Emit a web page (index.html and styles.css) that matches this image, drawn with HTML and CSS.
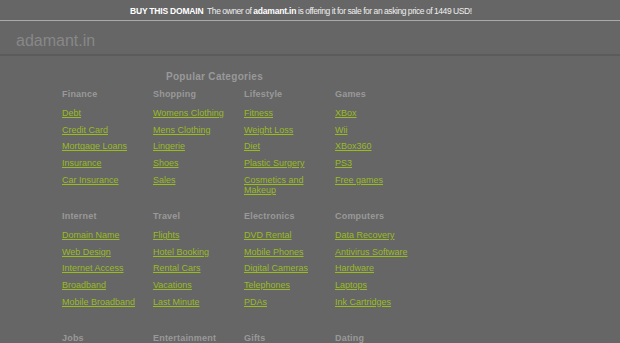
FILE: index.html
```html
<!DOCTYPE html>
<html lang="en">
<head>
    <meta charset="UTF-8">
    <meta name="viewport" content="width=device-width, initial-scale=1.0">
    <title>adamant.in</title>
    <link rel="stylesheet" href="styles.css">
</head>
<body>
    <div class="sale">
        <b>BUY THIS DOMAIN</b> The owner of <b class="dom">adamant.in</b> is offering it for sale for an asking price of 1449 USD!
    </div>
    <div class="header">adamant.in</div>

    <div class="content">
        <div class="title">Popular Categories</div>
        <div class="cats">
            <div class="cat">
                <h3>Finance</h3>
                <a href="#">Debt</a>
                <a href="#">Credit Card</a>
                <a href="#">Mortgage Loans</a>
                <a href="#">Insurance</a>
                <a href="#">Car Insurance</a>
            </div>
            <div class="cat">
                <h3>Shopping</h3>
                <a href="#">Womens Clothing</a>
                <a href="#">Mens Clothing</a>
                <a href="#">Lingerie</a>
                <a href="#">Shoes</a>
                <a href="#">Sales</a>
            </div>
            <div class="cat">
                <h3>Lifestyle</h3>
                <a href="#">Fitness</a>
                <a href="#">Weight Loss</a>
                <a href="#">Diet</a>
                <a href="#">Plastic Surgery</a>
                <a href="#">Cosmetics and Makeup</a>
            </div>
            <div class="cat">
                <h3>Games</h3>
                <a href="#">XBox</a>
                <a href="#">Wii</a>
                <a href="#">XBox360</a>
                <a href="#">PS3</a>
                <a href="#">Free games</a>
            </div>

            <div class="cat">
                <h3>Internet</h3>
                <a href="#">Domain Name</a>
                <a href="#">Web Design</a>
                <a href="#">Internet Access</a>
                <a href="#">Broadband</a>
                <a href="#">Mobile Broadband</a>
            </div>
            <div class="cat">
                <h3>Travel</h3>
                <a href="#">Flights</a>
                <a href="#">Hotel Booking</a>
                <a href="#">Rental Cars</a>
                <a href="#">Vacations</a>
                <a href="#">Last Minute</a>
            </div>
            <div class="cat">
                <h3>Electronics</h3>
                <a href="#">DVD Rental</a>
                <a href="#">Mobile Phones</a>
                <a href="#">Digital Cameras</a>
                <a href="#">Telephones</a>
                <a href="#">PDAs</a>
            </div>
            <div class="cat">
                <h3>Computers</h3>
                <a href="#">Data Recovery</a>
                <a href="#">Antivirus Software</a>
                <a href="#">Hardware</a>
                <a href="#">Laptops</a>
                <a href="#">Ink Cartridges</a>
            </div>

            <div class="cat">
                <h3>Jobs</h3>
            </div>
            <div class="cat">
                <h3>Entertainment</h3>
            </div>
            <div class="cat">
                <h3>Gifts</h3>
            </div>
            <div class="cat">
                <h3>Dating</h3>
            </div>
        </div>
    </div>
</body>
</html>
```

FILE: styles.css
```css
*{
    margin: 0;
    padding: 0;
}
html,body{
    background-color: #666;
    font-family: "Liberation Sans", Arial, sans-serif;
    overflow: hidden;
}
.sale{
    height: 20px;
    line-height: 22px;
    border-bottom: 1px solid #aaa;
    color: #eee;
    font-size: 8.5px;
    letter-spacing: -0.45px;
    padding-left: 130px;
    white-space: nowrap;
}
.sale b{
    color: #fff;
    letter-spacing: -0.2px;
    margin-right: 2px;
}
.sale b.dom{
    margin-right: 0;
}
.header{
    height: 33px;
    line-height: 39px;
    border-bottom: 2px solid #5b5b5b;
    padding-left: 16px;
    color: #888;
    font-size: 16px;
}
.content{
    padding-left: 62px;
    padding-top: 15px;
}
.title{
    width: 305px;
    text-align: center;
    color: #999;
    font-weight: bold;
    font-size: 10px;
    letter-spacing: 0.3px;
    line-height: 12px;
}
.cats{
    display: grid;
    grid-template-columns: repeat(4, 91px);
    grid-template-rows: 122px 122px auto;
    margin-top: 5px;
}
.cat{
    display: flex;
    flex-direction: column;
    align-items: flex-start;
    padding-right: 11px;
}
.cat h3{
    color: #999;
    font-size: 9px;
    font-weight: bold;
    letter-spacing: 0.2px;
    line-height: 12px;
    margin-bottom: 8px;
}
.cat:nth-child(n+9) h3{
    margin-bottom: 0;
}
.cat a{
    color: #99bb22;
    font-size: 9px;
    line-height: 10px;
    margin-bottom: 6.7px;
}
```
